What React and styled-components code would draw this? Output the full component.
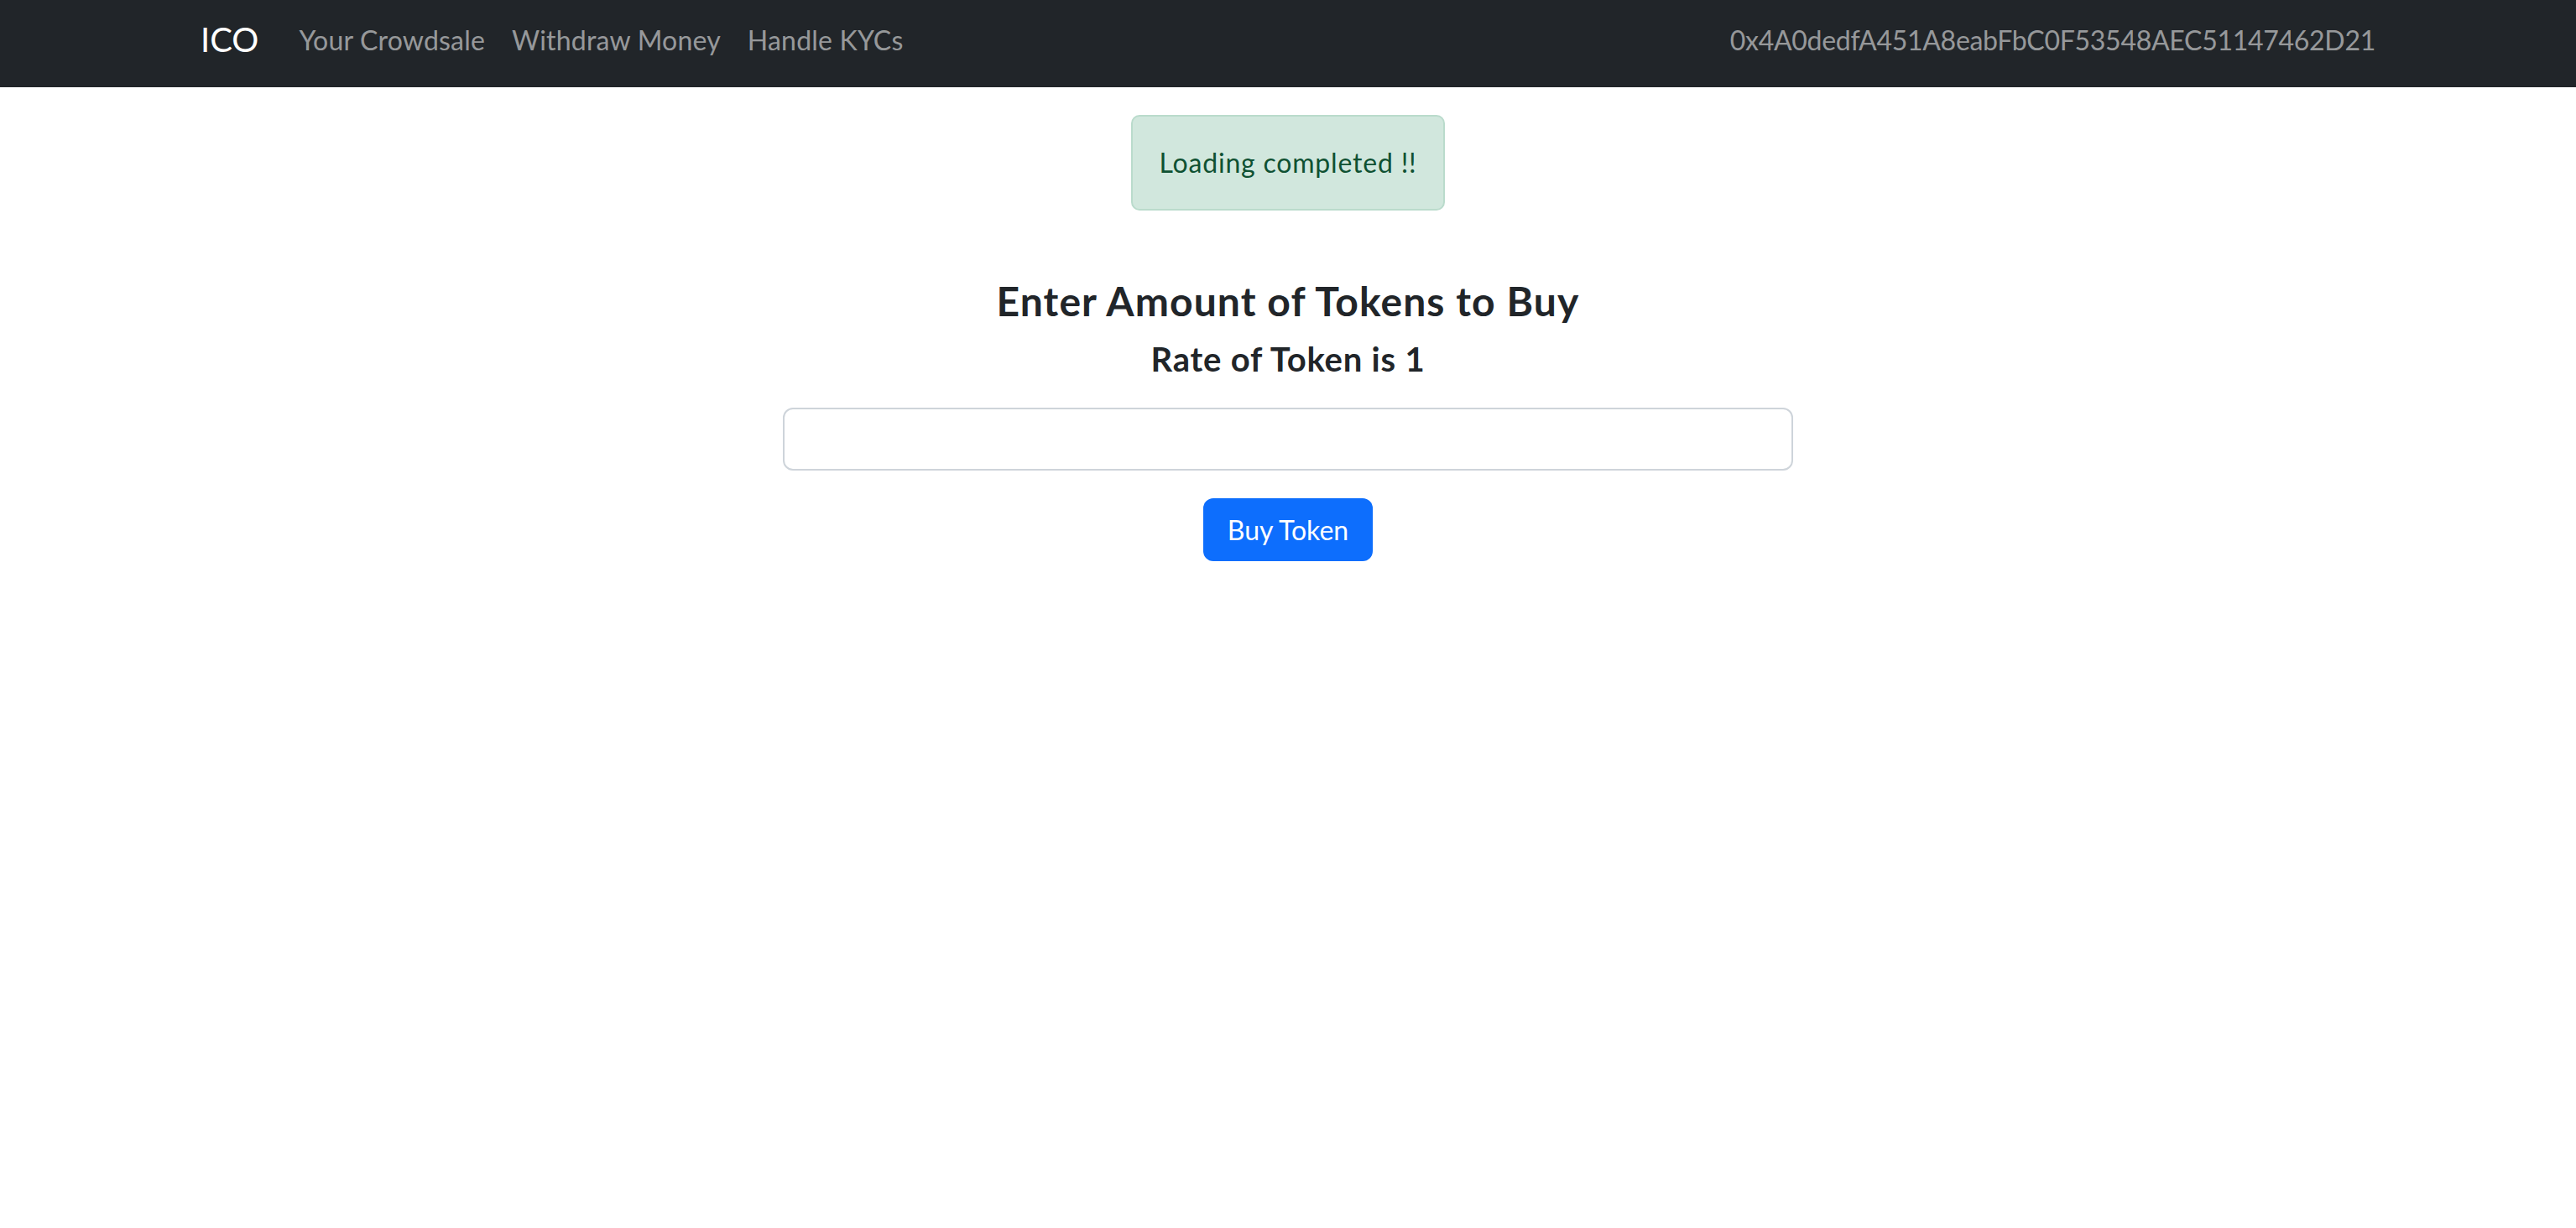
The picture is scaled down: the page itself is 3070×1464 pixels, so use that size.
import React from "react";
import styled, { createGlobalStyle } from "styled-components";

const GlobalStyle = createGlobalStyle`
  body {
    margin: 0;
    background-color: #fff;
    font-family: Lato, "Open Sans", sans-serif;
    color: #212529;
  }
`;

const Navbar = styled.nav`
  height: 104px;
  background-color: #212529;
  display: flex;
  justify-content: center;
`;

const NavInner = styled.div`
  width: 2640px;
  padding: 0 24px 10px;
  box-sizing: border-box;
  display: flex;
  align-items: center;
  justify-content: space-between;
`;

const NavLeft = styled.div`
  display: flex;
  align-items: center;
`;

const Brand = styled.a`
  color: #fff;
  font-size: 40px;
  margin-right: 32px;
  text-decoration: none;
`;

const NavLink = styled.a`
  color: rgba(255, 255, 255, 0.55);
  font-size: 32px;
  letter-spacing: 0.2px;
  padding: 0 16px;
  text-decoration: none;
`;

const Account = styled.span`
  color: rgba(255, 255, 255, 0.55);
  font-size: 32px;
  letter-spacing: -0.28px;
`;

const Main = styled.main`
  display: flex;
  flex-direction: column;
  align-items: center;
`;

const Alert = styled.div`
  margin-top: 33px;
  padding: 33px 32px;
  border: 2px solid #badbcc;
  border-radius: 10px;
  background-color: #d1e7dd;
  color: #0f5132;
  font-size: 32px;
  line-height: 44px;
  letter-spacing: 0.8px;
`;

const Title = styled.h4`
  margin: 79px 0 16px;
  font-size: 48px;
  font-weight: 700;
  line-height: 1.2;
  letter-spacing: 1.1px;
`;

const Subtitle = styled.h5`
  margin: 0;
  font-size: 40px;
  font-weight: 700;
  line-height: 1.2;
  letter-spacing: 0.8px;
`;

const AmountInput = styled.input`
  margin-top: 34px;
  width: 1204px;
  height: 75px;
  box-sizing: border-box;
  border: 2px solid #ced4da;
  border-radius: 12px;
  padding: 12px 24px;
  font-size: 32px;
  font-family: inherit;
  outline: none;
`;

const BuyButton = styled.button`
  margin-top: 33px;
  width: 202px;
  height: 75px;
  border: none;
  border-radius: 12px;
  background-color: #0d6efd;
  color: #fff;
  font-size: 32px;
  font-family: inherit;
  cursor: pointer;
`;

export default function App() {
  return (
    <>
      <GlobalStyle />
      <Navbar>
        <NavInner>
          <NavLeft>
            <Brand href="#">ICO</Brand>
            <NavLink href="#">Your Crowdsale</NavLink>
            <NavLink href="#">Withdraw Money</NavLink>
            <NavLink href="#">Handle KYCs</NavLink>
          </NavLeft>
          <Account>0x4A0dedfA451A8eabFbC0F53548AEC51147462D21</Account>
        </NavInner>
      </Navbar>
      <Main>
        <Alert>Loading completed !!</Alert>
        <Title>Enter Amount of Tokens to Buy</Title>
        <Subtitle>Rate of Token is 1</Subtitle>
        <AmountInput type="text" />
        <BuyButton>Buy Token</BuyButton>
      </Main>
    </>
  );
}
